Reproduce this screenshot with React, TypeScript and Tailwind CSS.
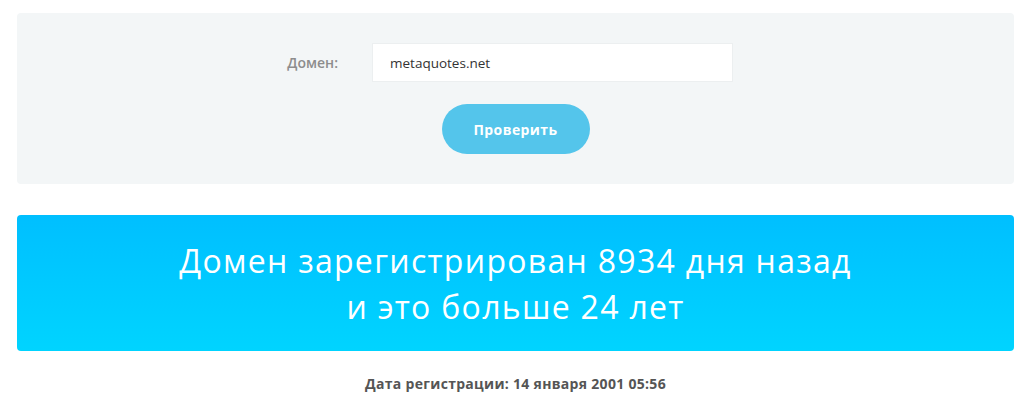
export default function App() {
  return (
    <div className="min-h-[397px] w-[1023px] bg-white pl-[17px] pr-[9px] pt-[13px] font-['Open_Sans',sans-serif]">
      {/* Form panel */}
      <div className="flex flex-col rounded bg-[#f3f6f7] pt-[30px] pb-[30px]">
        <div className="flex items-center">
          <label className="w-[355px] pr-[34px] text-right text-[14px] font-semibold text-[#8d8d8d]">
            Домен:
          </label>
          <input
            className="h-[39px] w-[361px] border border-[#eceff0] bg-white px-[17px] text-[13.5px] text-[#333] outline-none"
            defaultValue="metaquotes.net"
          />
        </div>
        <button className="mx-auto mt-[22px] h-[50px] w-[148px] rounded-full bg-[#54c5eb] text-[14px] font-bold tracking-[0.4px] text-white">
          Проверить
        </button>
      </div>

      {/* Result banner */}
      <div className="mt-[31px] flex h-[136px] flex-col items-center justify-center rounded bg-gradient-to-b from-[#00bfff] to-[#00d4ff] pt-[2px] text-center text-[32px] leading-[46px] tracking-[1.3px] text-white">
        <div>Домен зарегистрирован 8934 дня назад</div>
        <div>и это больше 24 лет</div>
      </div>

      <div className="mt-[22px] text-center text-[14px] font-bold tracking-[0.3px] text-[#555]">
        Дата регистрации: 14 января 2001 05:56
      </div>
    </div>
  );
}
